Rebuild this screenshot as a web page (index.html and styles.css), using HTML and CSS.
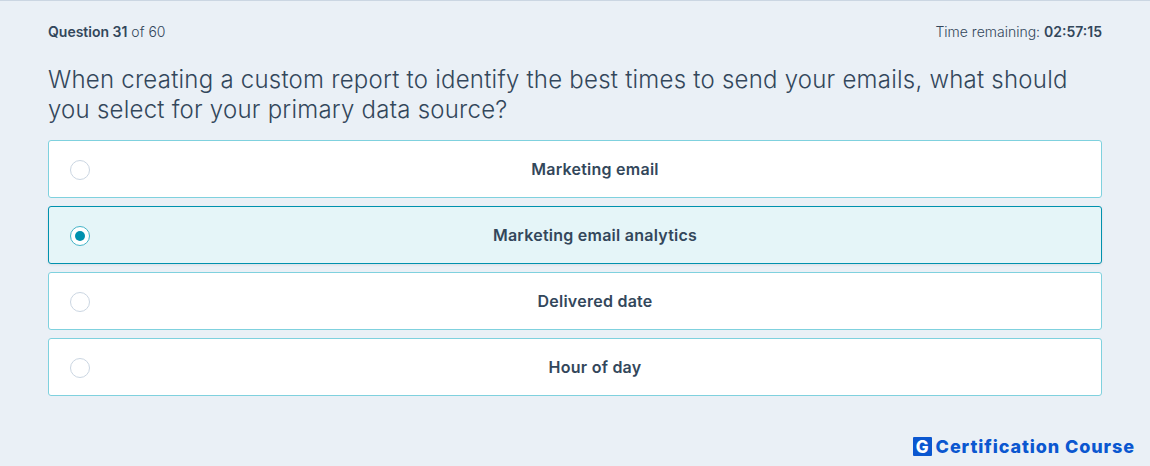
FILE: index.html
```html
<!DOCTYPE html>
<html lang="en">
<head>
  <meta charset="UTF-8">
  <meta name="viewport" content="width=device-width, initial-scale=1.0">
  <title>Certification Course</title>
  <link rel="stylesheet" href="styles.css">
</head>

<body>
  <main class="quiz">
    <div class="top-bar">
      <p><strong>Question 31</strong> of 60</p>
      <p>Time remaining: <strong>02:57:15</strong></p>
    </div>

    <h1 class="pergunta">When creating a custom report to identify the best times to send your emails, what should you select for your primary data source?</h1>

    <div class="opcoes">
      <label class="opcao">
        <span class="radio"></span>
        <span class="opcao-texto">Marketing email</span>
      </label>
      <label class="opcao selecionada">
        <span class="radio"></span>
        <span class="opcao-texto">Marketing email analytics</span>
      </label>
      <label class="opcao">
        <span class="radio"></span>
        <span class="opcao-texto">Delivered date</span>
      </label>
      <label class="opcao">
        <span class="radio"></span>
        <span class="opcao-texto">Hour of day</span>
      </label>
    </div>
  </main>

  <footer class="marca">
    <span class="marca-icone">G</span>
    <span class="marca-nome">Certification Course</span>
  </footer>
</body>
</html>
```

FILE: styles.css
```css
body {
  margin: 0;
  height: 466px;
  overflow: hidden;
  box-sizing: border-box;
  border-top: 1px solid #cbd6e2;
  background-color: #eaf0f6;
  color: #33475b;
  font-family: "Inter", Arial, sans-serif;
  font-weight: 300;
}

.quiz {
  padding: 0 48px;
}

.top-bar {
  display: flex;
  justify-content: space-between;
  align-items: center;
  height: 60px;
  font-size: 14px;
}

.top-bar p {
  margin: 0;
}

.top-bar strong {
  font-weight: 600;
}

.pergunta {
  margin: 4px 0 15px;
  font-size: 24px;
  font-weight: 300;
  line-height: 30px;
  letter-spacing: 0.23px;
}

.opcoes {
  display: flex;
  flex-direction: column;
  gap: 8px;
}

.opcao {
  display: flex;
  align-items: center;
  position: relative;
  height: 58px;
  box-sizing: border-box;
  padding-left: 40px;
  background-color: #fff;
  border: 1px solid #7fd1de;
  border-radius: 3px;
}

.radio {
  position: absolute;
  left: 21px;
  top: 19px;
  width: 20px;
  height: 20px;
  box-sizing: border-box;
  background-color: #fff;
  border: 1px solid #cbd6e2;
  border-radius: 50%;
}

.opcao-texto {
  flex: 1;
  text-align: center;
  font-size: 16px;
  font-weight: 600;
  letter-spacing: 0.25px;
}

.selecionada {
  background-color: #e5f5f8;
  border-color: #0091ae;
  box-shadow: 0 1px 3px rgba(0,0,0,0.08);
}

.selecionada .radio {
  border-color: #45b4c8;
}

.selecionada .radio::after {
  content: "";
  position: absolute;
  left: 4px;
  top: 4px;
  width: 10px;
  height: 10px;
  background-color: #0091ae;
  border-radius: 50%;
}

.marca {
  display: flex;
  justify-content: flex-end;
  align-items: center;
  gap: 4px;
  margin-top: 40px;
  padding-right: 15px;
  color: #0b57d0;
}

.marca-icone {
  display: flex;
  justify-content: center;
  align-items: center;
  width: 19px;
  height: 19px;
  background-color: #0b57d0;
  border-radius: 1px;
  color: #fff;
  font-size: 17px;
  font-weight: 800;
}

.marca-nome {
  font-size: 18px;
  font-weight: 800;
  letter-spacing: 0.9px;
}
```
